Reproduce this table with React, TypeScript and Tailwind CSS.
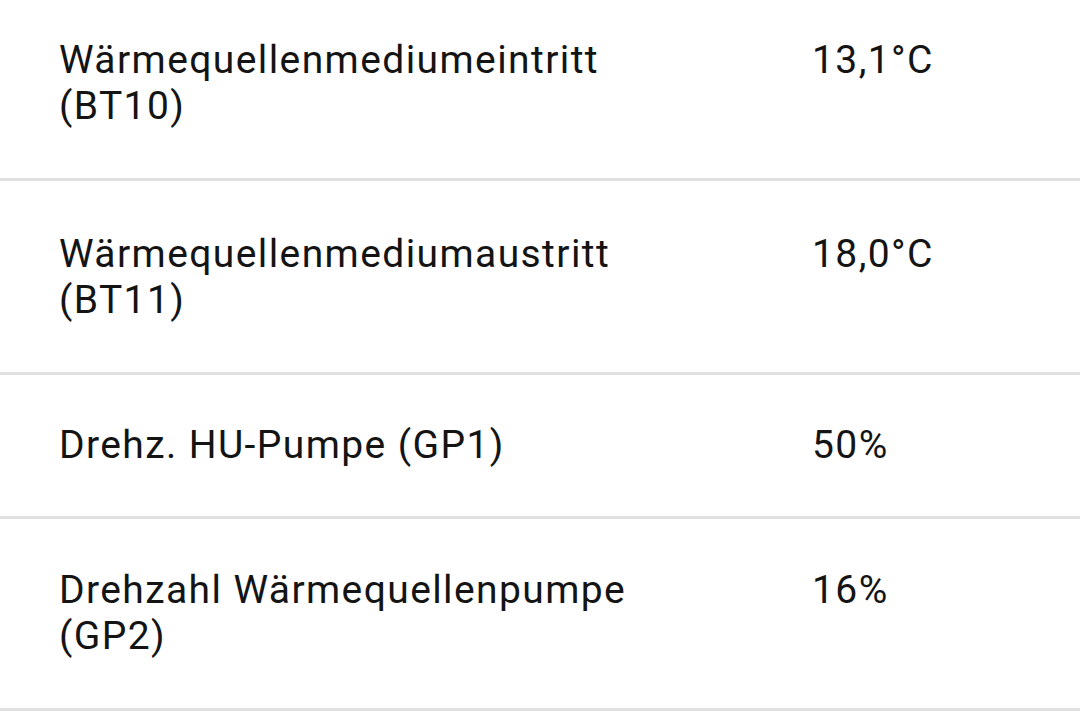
const rows = [
  { label: "Wärmequellenmediumeintritt (BT10)", value: "13,1°C", pad: "pt-[37px] pb-[49px]" },
  { label: "Wärmequellenmediumaustritt (BT11)", value: "18,0°C", pad: "pt-[50px] pb-[49px]" },
  { label: "Drehz. HU-Pumpe (GP1)", value: "50%", pad: "pt-[47px] pb-[48px]" },
  { label: "Drehzahl Wärmequellenpumpe (GP2)", value: "16%", pad: "pt-[48px] pb-[49px]" },
];

export default function App() {
  return (
    <div
      className="w-[1080px] h-[722px] overflow-hidden bg-white text-[#141414]"
      style={{ fontFamily: "Roboto, 'Noto Sans', sans-serif" }}
    >
      {rows.map((r) => (
        <div
          key={r.label}
          className={
            "flex border-b-[3px] border-[#e0e0e0] pl-[59px] text-[39px] leading-[46px] tracking-[1.4px] " +
            r.pad
          }
        >
          <div className="w-[753px] shrink-0 pr-[130px]">{r.label}</div>
          <div>{r.value}</div>
        </div>
      ))}
    </div>
  );
}
